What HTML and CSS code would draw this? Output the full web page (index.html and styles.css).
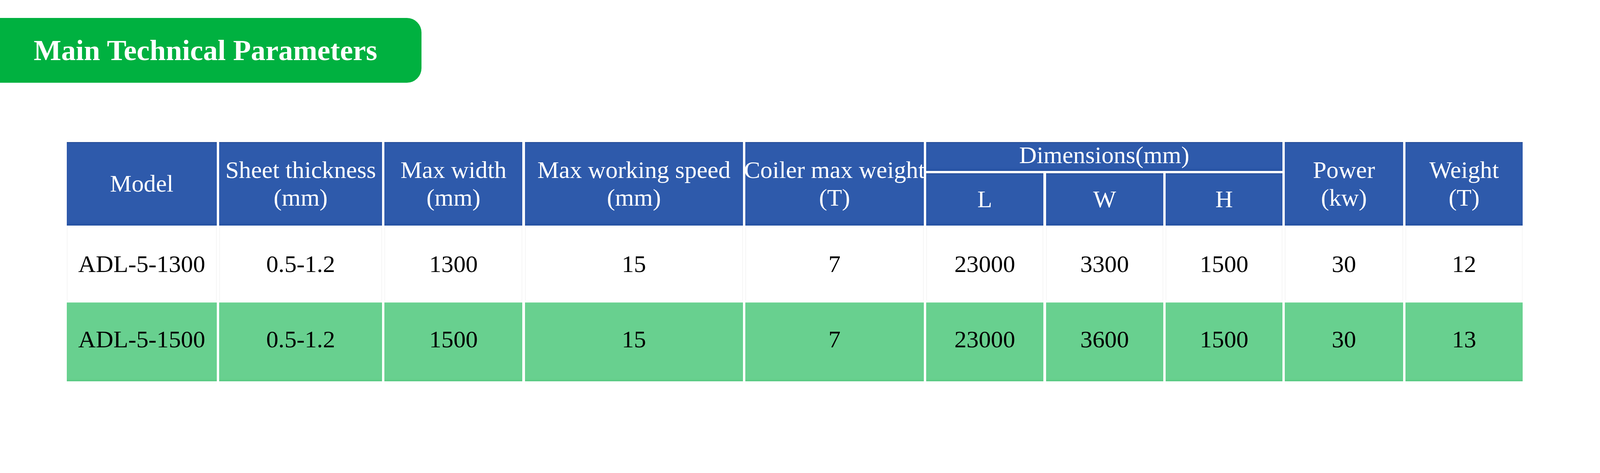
FILE: index.html
```html
<!DOCTYPE html>
<html lang="en">
<head>
<meta charset="utf-8">
<title>Main Technical Parameters</title>
<link rel="stylesheet" href="styles.css">
</head>
<body>
<div class="page">
  <div class="title-bar"><h1 class="title">Main Technical Parameters</h1></div>
  <div class="spec-table">
    <div class="cell head tall">Model</div>
    <div class="cell head tall">Sheet thickness<br>(mm)</div>
    <div class="cell head tall">Max width<br>(mm)</div>
    <div class="cell head tall">Max working speed<br>(mm)</div>
    <div class="cell head tall">Coiler max weight<br>(T)</div>
    <div class="cell head group">Dimensions(mm)</div>
    <div class="cell head tall col-power">Power<br>(kw)</div>
    <div class="cell head tall col-weight">Weight<br>(T)</div>
    <div class="cell head sub col-l">L</div>
    <div class="cell head sub col-w">W</div>
    <div class="cell head sub col-h">H</div>

    <div class="cell plain">ADL-5-1300</div>
    <div class="cell plain">0.5-1.2</div>
    <div class="cell plain">1300</div>
    <div class="cell plain">15</div>
    <div class="cell plain">7</div>
    <div class="cell plain">23000</div>
    <div class="cell plain">3300</div>
    <div class="cell plain">1500</div>
    <div class="cell plain">30</div>
    <div class="cell plain">12</div>

    <div class="cell green">ADL-5-1500</div>
    <div class="cell green">0.5-1.2</div>
    <div class="cell green">1500</div>
    <div class="cell green">15</div>
    <div class="cell green">7</div>
    <div class="cell green">23000</div>
    <div class="cell green">3600</div>
    <div class="cell green">1500</div>
    <div class="cell green">30</div>
    <div class="cell green">13</div>
  </div>
</div>
</body>
</html>
```

FILE: styles.css
```css
:root {
  /* one reference pixel, scaled to the viewport width */
  --u: calc(100vw / 4606);
}

html, body {
  margin: 0;
  padding: 0;
  background: #ffffff;
  overflow: hidden;
}

.page {
  width: 100vw;
  height: calc(1212 * var(--u));
  padding-top: calc(52 * var(--u));
  box-sizing: border-box;
  font-family: "Liberation Serif", "Times New Roman", serif;
}

.title-bar {
  width: calc(1213 * var(--u));
  height: calc(186 * var(--u));
  background: #00b140;
  border-radius: 0 calc(42 * var(--u)) calc(42 * var(--u)) 0;
  display: flex;
  align-items: center;
  box-sizing: border-box;
  padding-left: calc(97 * var(--u));
}

.title {
  margin: 0;
  color: #ffffff;
  font-size: calc(84 * var(--u));
  font-weight: bold;
  line-height: 1;
  white-space: nowrap;
}

.spec-table {
  margin-top: calc(171 * var(--u));
  margin-left: calc(192 * var(--u));
  width: calc(4192 * var(--u));
  display: grid;
  grid-template-columns:
    calc(432 * var(--u)) calc(469 * var(--u)) calc(397 * var(--u))
    calc(628 * var(--u)) calc(513 * var(--u)) calc(338 * var(--u))
    calc(338 * var(--u)) calc(336 * var(--u)) calc(340 * var(--u))
    calc(338 * var(--u));
  grid-template-rows: calc(84 * var(--u)) calc(151 * var(--u)) calc(210 * var(--u)) calc(227 * var(--u));
  column-gap: calc(7 * var(--u));
  row-gap: calc(6 * var(--u));
  background: #ffffff;
}

.cell {
  display: flex;
  align-items: center;
  justify-content: center;
  text-align: center;
  font-size: calc(70 * var(--u));
  line-height: calc(80 * var(--u));
  white-space: nowrap;
  box-sizing: border-box;
}

.head {
  background: #2e5aab;
  color: #ffffff;
  box-shadow: inset 0 calc(3 * var(--u)) calc(3 * var(--u)) calc(-2 * var(--u)) #1f3f80,
              inset 0 calc(-10 * var(--u)) calc(6 * var(--u)) calc(-6 * var(--u)) #2450a0;
}

.tall {
  grid-row: 1 / span 2;
}

.group {
  grid-column: 6 / span 3;
  grid-row: 1;
  padding-bottom: calc(8 * var(--u));
}

.sub {
  grid-row: 2;
}

.col-l { grid-column: 6; }
.col-w { grid-column: 7; }
.col-h { grid-column: 8; }
.col-power { grid-column: 9; }
.col-weight { grid-column: 10; }

.plain {
  background: #ffffff;
  color: #000000;
  box-shadow: inset calc(3 * var(--u)) 0 calc(3 * var(--u)) calc(-2 * var(--u)) #ececec,
              inset calc(-3 * var(--u)) 0 calc(3 * var(--u)) calc(-2 * var(--u)) #ececec;
}

.green {
  background: #68d08f;
  color: #000000;
  padding-bottom: calc(16 * var(--u));
  box-shadow: inset 0 calc(3 * var(--u)) calc(3 * var(--u)) calc(-2 * var(--u)) #7ad89d,
              inset 0 calc(-8 * var(--u)) calc(5 * var(--u)) calc(-5 * var(--u)) #55c77f;
}
```
